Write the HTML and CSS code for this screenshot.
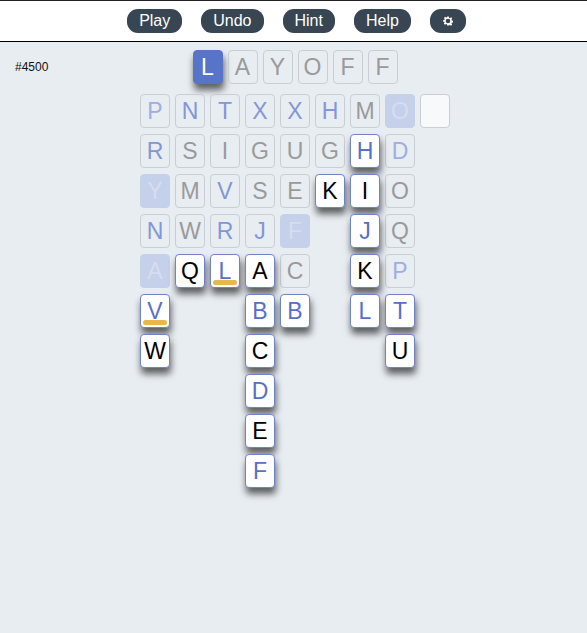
FILE: index.html
```html
<!DOCTYPE html>
<html>
<head>
<meta charset="utf-8">
<link rel="stylesheet" href="styles.css">
</head>
<body>
<header class="topbar">
  <button class="btn">Play</button>
  <button class="btn">Undo</button>
  <button class="btn">Hint</button>
  <button class="btn">Help</button>
  <button class="btn btn-icon" aria-label="Settings">
    <svg width="10" height="10" viewBox="0 0 24 24"><path fill="#fff" fill-rule="evenodd" d="M10 1h4l.6 3.2 2 .9 2.7-1.9 2.8 2.8-1.9 2.7.9 2 3.2.6v4l-3.2.6-.9 2 1.9 2.7-2.8 2.8-2.7-1.9-2 .9L14 23h-4l-.6-3.2-2-.9-2.7 1.9-2.8-2.8 1.9-2.7-.9-2L0 14v-4l3.2-.6.9-2L2.2 4.7 5 1.9l2.7 1.9 2-.9zM12 6.5a5.5 5.5 0 1 0 0 11 5.5 5.5 0 1 0 0-11z"/></svg>
  </button>
</header>
<main class="page">
  <div class="side"><span class="puzzle-id">#4500</span></div>
  <div class="board">
    <div class="word-row">
      <div class="cell tile-active">L</div>
      <div class="cell">A</div>
      <div class="cell">Y</div>
      <div class="cell">O</div>
      <div class="cell">F</div>
      <div class="cell">F</div>
    </div>
    <div class="grid">
      <div class="cell blue faint">P</div><div class="cell blue">N</div><div class="cell blue">T</div><div class="cell blue">X</div><div class="cell blue">X</div><div class="cell blue">H</div><div class="cell">M</div><div class="cell filled">O</div><div class="cell blank"></div>
      <div class="cell blue">R</div><div class="cell">S</div><div class="cell">I</div><div class="cell">G</div><div class="cell">U</div><div class="cell">G</div><div class="cell tile blue">H</div><div class="cell blue faint">D</div><div class="gap"></div>
      <div class="cell filled">Y</div><div class="cell">M</div><div class="cell blue">V</div><div class="cell">S</div><div class="cell">E</div><div class="cell tile">K</div><div class="cell tile">I</div><div class="cell">O</div><div class="gap"></div>
      <div class="cell blue">N</div><div class="cell">W</div><div class="cell blue">R</div><div class="cell blue">J</div><div class="cell filled">F</div><div class="gap"></div><div class="cell tile blue">J</div><div class="cell">Q</div><div class="gap"></div>
      <div class="cell filled">A</div><div class="cell tile">Q</div><div class="cell tile blue marked">L</div><div class="cell tile">A</div><div class="cell">C</div><div class="gap"></div><div class="cell tile">K</div><div class="cell blue faint">P</div><div class="gap"></div>
      <div class="cell tile blue marked">V</div><div class="gap"></div><div class="gap"></div><div class="cell tile blue">B</div><div class="cell tile blue">B</div><div class="gap"></div><div class="cell tile blue">L</div><div class="cell tile blue">T</div><div class="gap"></div>
      <div class="cell tile">W</div><div class="gap"></div><div class="gap"></div><div class="cell tile">C</div><div class="gap"></div><div class="gap"></div><div class="gap"></div><div class="cell tile">U</div><div class="gap"></div>
      <div class="gap"></div><div class="gap"></div><div class="gap"></div><div class="cell tile blue">D</div><div class="gap"></div><div class="gap"></div><div class="gap"></div><div class="gap"></div><div class="gap"></div>
      <div class="gap"></div><div class="gap"></div><div class="gap"></div><div class="cell tile">E</div><div class="gap"></div><div class="gap"></div><div class="gap"></div><div class="gap"></div><div class="gap"></div>
      <div class="gap"></div><div class="gap"></div><div class="gap"></div><div class="cell tile blue">F</div><div class="gap"></div><div class="gap"></div><div class="gap"></div><div class="gap"></div><div class="gap"></div>
    </div>
  </div>
  <div class="side"></div>
</main>
</body>
</html>
```
FILE: styles.css
```css
html, body {
  margin: 0;
  padding: 0;
  background: #e8edf2;
  font-family: "Liberation Sans", Arial, sans-serif;
  min-height: 633px;
}
.topbar {
  background: #fff;
  height: 40px;
  border-top: 1px solid #222;
  border-bottom: 1px solid #000;
  display: flex;
  justify-content: center;
  align-items: center;
  gap: 19px;
  box-sizing: content-box;
  padding-left: 6px;
}
.btn {
  background: #374652;
  color: #fff;
  border: none;
  border-radius: 11px;
  height: 24px;
  padding: 0 12px;
  font-family: "Liberation Sans", Arial, sans-serif;
  font-size: 16px;
  line-height: 24px;
  margin-top: -1px;
}
.btn-icon {
  width: 36px;
  padding: 0;
  display: flex;
  align-items: center;
  justify-content: center;
}
.page {
  display: grid;
  grid-template-columns: 1fr auto 1fr;
}
.side {
  padding-top: 15px;
  padding-left: 15px;
}
.puzzle-id {
  font-size: 12px;
  color: #111;
}
.board {
  padding-top: 8px;
  display: flex;
  flex-direction: column;
  align-items: center;
}
.word-row {
  display: flex;
  gap: 5px;
  margin-bottom: 10px;
  margin-left: 3px;
}
.grid {
  display: grid;
  grid-template-columns: repeat(9, 30px);
  grid-auto-rows: 34px;
  gap: 6px 5px;
  margin-left: 3px;
}
.cell {
  width: 30px;
  height: 34px;
  box-sizing: border-box;
  border: 1px solid #c9ced4;
  border-radius: 4px;
  display: flex;
  align-items: center;
  justify-content: center;
  font-size: 23px;
  color: #9a9a9a;
  position: relative;
}
.cell.blue { color: #8396d6; }
.cell.faint { color: #9eaee0; }
.cell.filled {
  background: #c5d0ea;
  border-color: #c5d0ea;
  color: #d6ddf0;
}
.cell.blank {
  background: #f8f9fb;
  border-color: #c9ced4;
}
.cell.tile {
  background: #fff;
  border: 1px solid #7083c9;
  color: #000;
  box-shadow: 1px 6px 7px rgba(0, 0, 0, 0.6);
  z-index: 1;
}
.cell.tile.blue { color: #5670c6; }
.cell.tile-active {
  background: #5874c8;
  border-color: #5874c8;
  color: #fff;
  box-shadow: 1px 6px 7px rgba(0, 0, 0, 0.6);
}
.cell.marked::after {
  content: "";
  position: absolute;
  left: 2px;
  right: 2px;
  bottom: 2px;
  height: 5px;
  border-radius: 3px;
  background: #e8b64a;
}
```
